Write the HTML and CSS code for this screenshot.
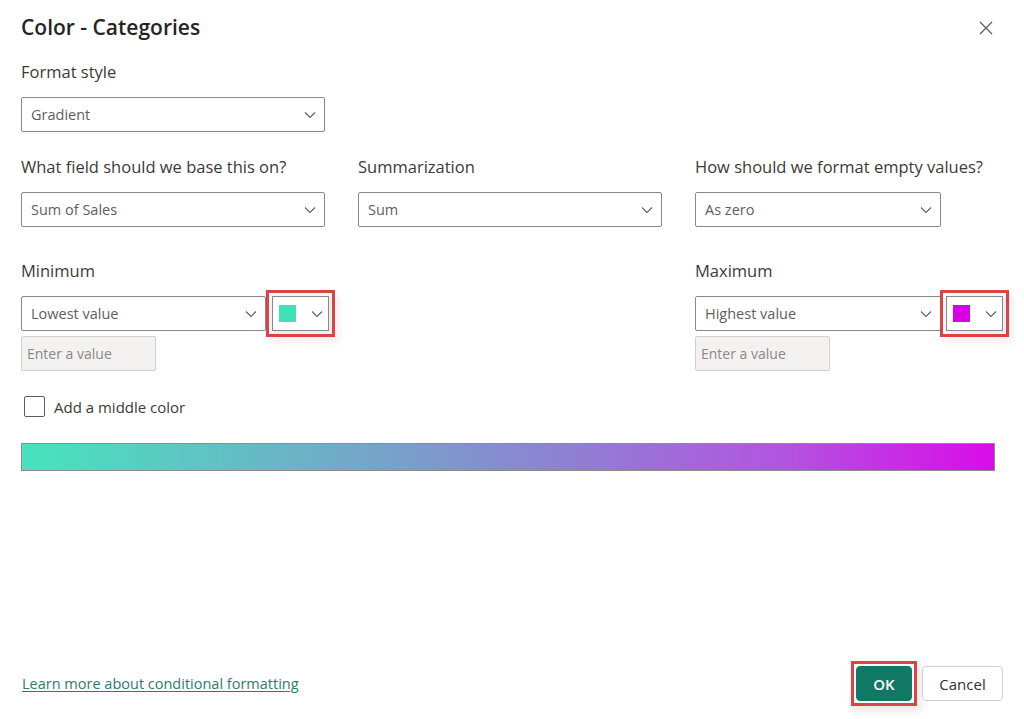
FILE: index.html
```html
<!DOCTYPE html>
<html lang="en">
<head>
<meta charset="utf-8">
<title>Color - Categories</title>
<link rel="stylesheet" href="styles.css">
</head>
<body>
<div class="dialog">
  <header class="header">
    <h1 class="title">Color - Categories</h1>
    <button class="close" aria-label="Close">
      <svg width="16" height="16" viewBox="0 0 16 16"><path d="M2 2 L14 14 M14 2 L2 14" stroke="#605e5c" stroke-width="1.3" fill="none"/></svg>
    </button>
  </header>

  <section class="field single">
    <div class="label">Format style</div>
    <div class="select w304"><span>Gradient</span><svg class="chev" width="12" height="8" viewBox="0 0 12 8"><path d="M1 1.5 L6 6.5 L11 1.5" stroke="#605e5c" stroke-width="1.1" fill="none"/></svg></div>
  </section>

  <section class="grid row2">
    <div class="field">
      <div class="label">What field should we base this on?</div>
      <div class="select w304"><span>Sum of Sales</span><svg class="chev" width="12" height="8" viewBox="0 0 12 8"><path d="M1 1.5 L6 6.5 L11 1.5" stroke="#605e5c" stroke-width="1.1" fill="none"/></svg></div>
    </div>
    <div class="field">
      <div class="label">Summarization</div>
      <div class="select w304"><span>Sum</span><svg class="chev" width="12" height="8" viewBox="0 0 12 8"><path d="M1 1.5 L6 6.5 L11 1.5" stroke="#605e5c" stroke-width="1.1" fill="none"/></svg></div>
    </div>
    <div class="field">
      <div class="label">How should we format empty values?</div>
      <div class="select w246"><span>As zero</span><svg class="chev" width="12" height="8" viewBox="0 0 12 8"><path d="M1 1.5 L6 6.5 L11 1.5" stroke="#605e5c" stroke-width="1.1" fill="none"/></svg></div>
    </div>
  </section>

  <section class="grid row3">
    <div class="field">
      <div class="label">Minimum</div>
      <div class="pair">
        <div class="select w245"><span>Lowest value</span><svg class="chev" width="12" height="8" viewBox="0 0 12 8"><path d="M1 1.5 L6 6.5 L11 1.5" stroke="#605e5c" stroke-width="1.1" fill="none"/></svg></div>
        <div class="picker marked gap6"><span class="swatch teal"></span><svg class="chev" width="12" height="8" viewBox="0 0 12 8"><path d="M1 1.5 L6 6.5 L11 1.5" stroke="#605e5c" stroke-width="1.1" fill="none"/></svg></div>
      </div>
      <div class="input">Enter a value</div>
    </div>
    <div class="field"></div>
    <div class="field">
      <div class="label">Maximum</div>
      <div class="pair">
        <div class="select w246"><span>Highest value</span><svg class="chev" width="12" height="8" viewBox="0 0 12 8"><path d="M1 1.5 L6 6.5 L11 1.5" stroke="#605e5c" stroke-width="1.1" fill="none"/></svg></div>
        <div class="picker marked gap5"><span class="swatch magenta"></span><svg class="chev" width="12" height="8" viewBox="0 0 12 8"><path d="M1 1.5 L6 6.5 L11 1.5" stroke="#605e5c" stroke-width="1.1" fill="none"/></svg></div>
      </div>
      <div class="input">Enter a value</div>
    </div>
  </section>

  <label class="check">
    <span class="box"></span>
    <span>Add a middle color</span>
  </label>

  <div class="gradient"></div>

  <footer class="footer">
    <a class="link" href="#">Learn more about conditional formatting</a>
    <div class="buttons">
      <span class="mark-ok"><button class="btn primary">OK</button></span>
      <button class="btn secondary">Cancel</button>
    </div>
  </footer>
</div>
</body>
</html>
```

FILE: styles.css
```css
* { box-sizing: border-box; }

html, body {
  margin: 0;
  padding: 0;
  background: #ffffff;
}

body {
  font-family: "Open Sans", "Noto Sans", "Liberation Sans", sans-serif;
  color: #323130;
}

.dialog {
  height: 719px;
  padding: 0 21px 18px 21px;
  display: flex;
  flex-direction: column;
}

.header {
  display: flex;
  justify-content: space-between;
  align-items: center;
  padding-top: 14px;
  height: 41px;
}

.title {
  margin: 0;
  font-size: 21px;
  font-weight: 600;
  line-height: 27px;
  color: #252423;
}

.close {
  border: 0;
  background: transparent;
  padding: 0;
  margin-right: 9px;
  width: 16px;
  height: 16px;
  display: flex;
}

.single { margin-top: 20px; }

.label {
  font-size: 16.5px;
  line-height: 22px;
  color: #3b3a39;
  margin-bottom: 14px;
  white-space: nowrap;
}

.grid {
  display: grid;
  grid-template-columns: 304px 304px 308px;
  column-gap: 33px;
}

.row2 { margin-top: 24px; }
.row3 { margin-top: 33px; }

.select {
  flex: none;
  height: 35px;
  border: 1px solid #8a8886;
  border-radius: 2px;
  background: #fff;
  display: flex;
  align-items: center;
  justify-content: space-between;
  padding: 0 8px 0 9px;
  font-size: 14.5px;
  color: #605e5c;
}

.w304 { width: 304px; }
.w246 { width: 246px; }
.w245 { width: 245px; }

.chev { flex: none; }

.pair {
  display: flex;
  align-items: center;
}

.picker {
  flex: none;
  width: 57px;
  height: 35px;
  border: 1px solid #8a8886;
  border-radius: 0;
  display: flex;
  align-items: center;
  justify-content: space-between;
  padding: 0 5px 0 6px;
}
.gap6 { margin-left: 6px; }
.gap5 { margin-left: 5px; }

.marked {
  outline: 3px solid #dc4343;
  outline-offset: 3px;
  box-shadow: 4px 5px 8px 6px rgba(0,0,0,0.07);
}

.swatch {
  width: 17px;
  height: 17px;
  display: block;
}
.teal { background: #3fe1b9; }
.magenta { background: #d600e4; }

.input {
  margin-top: 5px;
  width: 135px;
  height: 35px;
  border: 1px solid #d2d0ce;
  border-radius: 2px;
  background: #f3f2f1;
  font-size: 14px;
  color: #8a8886;
  display: flex;
  align-items: center;
  padding-left: 5px;
}

.check {
  margin-top: 25px;
  margin-left: 3px;
  display: flex;
  align-items: center;
  gap: 9px;
  font-size: 15px;
  color: #3b3a39;
}

.box {
  width: 21px;
  height: 21px;
  border: 1px solid #605e5c;
  border-radius: 2px;
  background: #fff;
  display: block;
}

.gradient {
  margin-top: 26px;
  width: 974px;
  height: 28px;
  border: 1px solid #8a8a8a;
  background: linear-gradient(to right, #47e4be 0%, #6db0c6 30%, #8d82d2 55%, #b255e0 78%, #d90ce8 100%);
}

.footer {
  margin-top: auto;
  display: flex;
  justify-content: space-between;
  align-items: center;
}

.link {
  margin-left: 1px;
  font-size: 14.5px;
  color: #2f7a72;
  text-decoration: underline;
  text-underline-offset: 2px;
}

.buttons {
  display: flex;
  align-items: center;
  gap: 10px;
}

.mark-ok {
  display: flex;
  padding: 2px;
  border: 3px solid #dc4343;
  margin: -5px;
  box-shadow: 3px 4px 6px 2px rgba(0,0,0,0.08);
}

.btn {
  height: 35px;
  border-radius: 4px;
  font-family: inherit;
  font-size: 15px;
  font-weight: 600;
  padding: 0;
}

.primary {
  width: 56px;
  background: #117865;
  border: 1px solid #117865;
  color: #fff;
}

.secondary {
  width: 81px;
  background: #fff;
  border: 1px solid #d2d0ce;
  color: #323130;
  font-weight: 400;
}
```
